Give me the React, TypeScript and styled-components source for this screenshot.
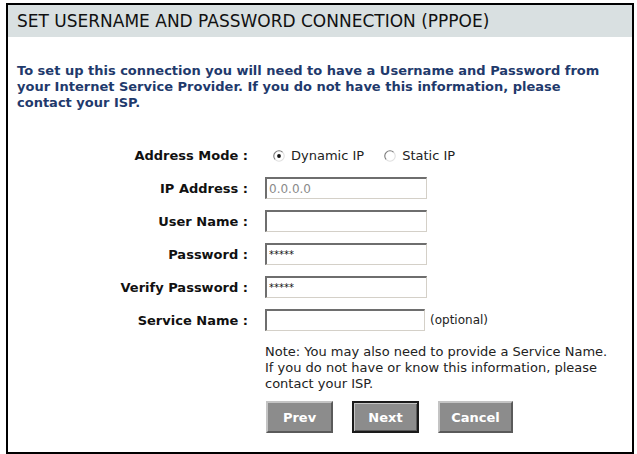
import React from 'react';
import { createGlobalStyle, styled } from 'styled-components';

const GlobalStyle = createGlobalStyle`
  html, body {
    margin: 0;
    padding: 0;
    background: #ffffff;
  }
  body {
    font-family: "DejaVu Sans", sans-serif;
    color: #111111;
  }
`;

const Page = styled.div`
  padding: 3px 0 0 6px;
  width: 637px;
  height: 454px;
  box-sizing: border-box;
  overflow: hidden;
`;

const Panel = styled.div`
  width: 628px;
  height: 451px;
  box-sizing: border-box;
  border: 2px solid #000000;
  background: #ffffff;
`;

const Header = styled.div`
  height: 32px;
  background: #d9e0e1;
  display: flex;
  align-items: center;
  padding-left: 9px;
  font-size: 17px;
  color: #111111;
`;

const Intro = styled.p`
  margin: 26px 0 0;
  padding: 0 9px;
  font-size: 13px;
  font-weight: bold;
  line-height: 16px;
  color: #1f3a6c;
  white-space: nowrap;
`;

const Form = styled.div`
  margin-top: 34px;
  display: grid;
  grid-template-columns: 240px 1fr;
  column-gap: 17px;
  row-gap: 11px;
  align-items: center;
`;

const Label = styled.div`
  text-align: right;
  font-size: 13px;
  font-weight: bold;
  color: #111111;
  white-space: nowrap;
`;

const Field = styled.div`
  display: flex;
  align-items: center;
  min-height: 21px;
`;

const TextBox = styled.input<{ $w?: number; $dim?: boolean }>`
  width: ${(p) => p.$w ?? 162}px;
  height: 22px;
  box-sizing: border-box;
  margin: 0;
  padding: 0 2px;
  border-style: solid;
  border-width: 2px 1px 1px 2px;
  border-color: #6e6e6e #d4d0c8 #d4d0c8 #6e6e6e;
  background: #ffffff;
  font-family: "DejaVu Sans", sans-serif;
  font-size: ${(p) => (p.$dim ? 12 : 10)}px;
  color: ${(p) => (p.$dim ? '#8a8a8a' : '#111111')};
  outline: none;
  &:disabled {
    color: #8a8a8a;
  }
`;

const Hint = styled.span`
  margin-left: 5px;
  font-size: 12px;
  color: #222222;
`;

const RadioOption = styled.label<{ $first?: boolean }>`
  display: inline-flex;
  align-items: center;
  gap: 6px;
  margin-left: ${(p) => (p.$first ? 8 : 0)}px;
  margin-right: 20px;
  font-size: 13px;
  color: #222222;
`;

const Note = styled.div`
  grid-column: 2;
  margin-top: 2px;
  font-size: 13px;
  line-height: 16px;
  color: #222222;
  white-space: nowrap;
`;

const Buttons = styled.div`
  grid-column: 2;
  display: flex;
  gap: 19px;
  padding-left: 1px;
  margin-top: -2px;
`;

const Button = styled.button<{ $w: number; $default?: boolean }>`
  width: ${(p) => p.$w}px;
  height: 32px;
  box-sizing: border-box;
  margin: 0;
  padding: 0;
  background: #8c8c8c;
  color: #ffffff;
  font-family: "DejaVu Sans", sans-serif;
  font-size: 13px;
  font-weight: bold;
  border-style: solid;
  border-width: 2px;
  border-color: ${(p) =>
    p.$default ? '#1a1a1a' : '#c4c4c4 #5a5a5a #5a5a5a #c4c4c4'};
  box-shadow: ${(p) => (p.$default ? 'inset 1px 1px 0 #c4c4c4, inset -1px -1px 0 #5a5a5a' : 'none')};
  cursor: pointer;
`;

const Radio = ({ checked }: { checked?: boolean }) => (
  <svg width="12" height="12" viewBox="0 0 12 12">
    <circle cx="6" cy="6" r="5.2" fill="#ffffff" />
    <path d="M2.3 9.7 A5.2 5.2 0 0 1 9.7 2.3" fill="none" stroke="#7a7a7a" strokeWidth="1.1" />
    <path d="M9.7 2.3 A5.2 5.2 0 0 1 2.3 9.7" fill="none" stroke="#e0e0e0" strokeWidth="1.1" />
    {checked && <circle cx="6" cy="6" r="1.9" fill="#111111" />}
  </svg>
);

export default function App() {
  return (
    <>
      <GlobalStyle />
      <Page>
        <Panel>
          <Header>SET USERNAME AND PASSWORD CONNECTION (PPPOE)</Header>
          <Intro>
            To set up this connection you will need to have a Username and Password from
            <br />
            your Internet Service Provider. If you do not have this information, please
            <br />
            contact your ISP.
          </Intro>
          <Form>
            <Label>Address Mode :</Label>
            <Field>
              <RadioOption $first>
                <Radio checked />
                Dynamic IP
              </RadioOption>
              <RadioOption>
                <Radio />
                Static IP
              </RadioOption>
            </Field>

            <Label>IP Address :</Label>
            <Field>
              <TextBox $dim disabled defaultValue="0.0.0.0" />
            </Field>

            <Label>User Name :</Label>
            <Field>
              <TextBox defaultValue="" />
            </Field>

            <Label>Password :</Label>
            <Field>
              <TextBox defaultValue="*****" />
            </Field>

            <Label>Verify Password :</Label>
            <Field>
              <TextBox defaultValue="*****" />
            </Field>

            <Label>Service Name :</Label>
            <Field>
              <TextBox $w={160} defaultValue="" />
              <Hint>(optional)</Hint>
            </Field>

            <Note>
              Note: You may also need to provide a Service Name.
              <br />
              If you do not have or know this information, please
              <br />
              contact your ISP.
            </Note>

            <Buttons>
              <Button $w={67}>Prev</Button>
              <Button $w={67} $default>
                Next
              </Button>
              <Button $w={75}>Cancel</Button>
            </Buttons>
          </Form>
        </Panel>
      </Page>
    </>
  );
}
